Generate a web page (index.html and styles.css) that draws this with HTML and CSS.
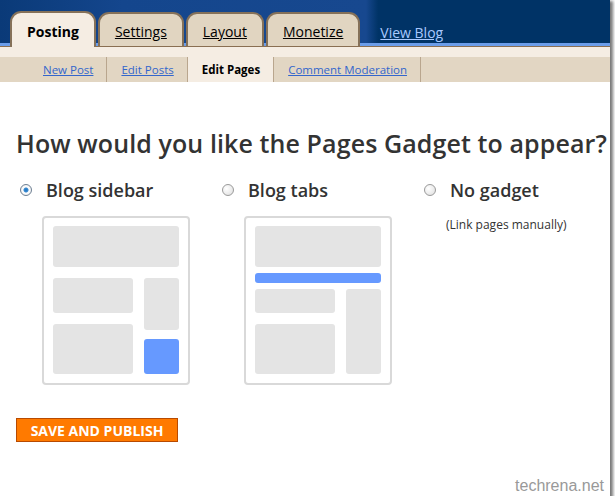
FILE: index.html
```html
<!DOCTYPE html>
<html>

<head>
    <meta charset="UTF-8">
    <title>Edit Pages</title>
    <link rel="stylesheet" href="styles.css">
</head>

<body>
    <div class="frame">
        <div class="header">
            <div class="tabs">
                <a class="tab active">Posting</a>
                <a class="tab" href="#">Settings</a>
                <a class="tab" href="#">Layout</a>
                <a class="tab" href="#">Monetize</a>
                <a class="view-blog" href="#">View Blog</a>
            </div>
        </div>
        <div class="strip"></div>
        <div class="subnav">
            <a class="sub" href="#">New Post</a>
            <a class="sub" href="#">Edit Posts</a>
            <span class="sub active">Edit Pages</span>
            <a class="sub" href="#">Comment Moderation</a>
        </div>

        <div class="content">
            <h1>How would you like the Pages Gadget to appear?</h1>

            <div class="options">
                <div class="option">
                    <div class="choice">
                        <span class="radio checked"></span>
                        <span class="label">Blog sidebar</span>
                    </div>
                    <div class="thumb">
                        <div class="blk top"></div>
                        <div class="cols">
                            <div class="col-main">
                                <div class="blk h35"></div>
                                <div class="blk h50"></div>
                            </div>
                            <div class="col-side">
                                <div class="blk h52"></div>
                                <div class="blk h35 blue"></div>
                            </div>
                        </div>
                    </div>
                </div>

                <div class="option">
                    <div class="choice">
                        <span class="radio"></span>
                        <span class="label">Blog tabs</span>
                    </div>
                    <div class="thumb tabs-thumb">
                        <div class="blk top"></div>
                        <div class="blk bar blue"></div>
                        <div class="cols">
                            <div class="col-main">
                                <div class="blk h24"></div>
                                <div class="blk h50"></div>
                            </div>
                            <div class="col-side">
                                <div class="blk full"></div>
                            </div>
                        </div>
                    </div>
                </div>

                <div class="option">
                    <div class="choice">
                        <span class="radio"></span>
                        <span class="label">No gadget</span>
                    </div>
                    <div class="note">(Link pages manually)</div>
                </div>
            </div>

            <button class="save">SAVE AND PUBLISH</button>
        </div>

        <div class="watermark">techrena.net</div>
    </div>
</body>

</html>
```

FILE: styles.css
```css
body {
    margin: 0;
    background: #fff;
    font-family: "Open Sans", "DejaVu Sans", sans-serif;
}

.frame {
    width: 610px;
    height: 496px;
    position: relative;
    overflow: hidden;
    background: #fff;
    box-shadow: 2px 2px 3px 1px #777;
}

/* top bar */
.header {
    height: 46px;
    background:
        linear-gradient(#6b9de9, #6b9de9) bottom / 100% 3px no-repeat,
        linear-gradient(90deg, #0a3a78 0, #14468d 20%, #17488f 60%, #003366 62%);
    border-bottom: 1px solid #8a6f52;
}

.tabs {
    display: flex;
    align-items: flex-end;
    height: 46px;
    padding-left: 10px;
    gap: 2px;
}

.tab {
    height: 32px;
    line-height: 36px;
    padding: 0 15px;
    background: #e1d5c1;
    border: 2px solid #857159;
    border-bottom: none;
    border-radius: 11px 11px 0 0;
    color: #000;
    font-size: 14px;
    text-decoration: underline;
}

.tab.active {
    background: #f5ede3;
    font-weight: bold;
    text-decoration: none;
    height: 34px;
    line-height: 38px;
    margin-bottom: -1px;
    position: relative;
}

.view-blog {
    margin-left: 18px;
    line-height: 26px;
    color: #a9c8ff;
    font-size: 14px;
}

.strip {
    height: 10px;
    background: #f5ede3;
}

.subnav {
    display: flex;
    height: 25px;
    padding-left: 29px;
    background: #e2d6c3;
}

.sub {
    padding: 0 13px 0 14px;
    line-height: 25px;
    font-size: 11.5px;
    color: #3366cc;
    border-right: 1px solid #b9a68e;
}

.sub.active {
    background: #f5ede3;
    color: #000;
    font-weight: bold;
}

/* main */
.content {
    padding: 0 16px;
}

h1 {
    margin: 44px 0 0;
    font-size: 25px;
    font-weight: 600;
    letter-spacing: 0.1px;
    color: #333;
    line-height: 34px;
    white-space: nowrap;
}

.options {
    display: flex;
    margin: 18px 0 0 4px;
}

.option {
    flex: none;
    width: 202px;
}

.choice {
    display: flex;
    align-items: center;
    gap: 14px;
    height: 24px;
}

.radio {
    width: 10px;
    height: 10px;
    border: 1px solid #9a9a9a;
    border-radius: 50%;
    background: radial-gradient(circle at 35% 35%, #fff, #ddd);
}

.radio.checked {
    background: radial-gradient(circle, #1a74c4 0, #3a8ad0 2px, #fff 3px, #e4e4e4 100%);
    border-color: #6d7f93;
}

.label {
    font-size: 18px;
    font-weight: 600;
    color: #333;
}

.note {
    margin: 14px 0 0 22px;
    font-size: 12px;
    color: #333;
}

.thumb {
    width: 126px;
    margin: 14px 0 0 22px;
    padding: 8px 9px 9px;
    border: 2px solid #d9d9d9;
    border-radius: 4px;
    display: flex;
    flex-direction: column;
    gap: 11px;
}

.tabs-thumb {
    gap: 6px;
}

.blk {
    background: #e4e4e4;
    border-radius: 3px;
}

.blk.blue {
    background: #6699ff;
}

.top { height: 41px; }
.bar { height: 10px; }
.h24 { height: 24px; }
.h35 { height: 35px; }
.h50 { height: 50px; }
.h52 { height: 52px; }

.cols {
    display: flex;
    gap: 11px;
}

.col-main {
    width: 80px;
    display: flex;
    flex-direction: column;
    gap: 11px;
}

.col-side {
    width: 35px;
    display: flex;
    flex-direction: column;
    gap: 9px;
}

.full {
    flex: 1;
}

.save {
    margin-top: 33px;
    width: 162px;
    height: 24px;
    padding: 0;
    background: #ff7a00;
    border: 1px solid #b84a00;
    color: #fff;
    font-family: "Open Sans", "DejaVu Sans", sans-serif;
    font-size: 14px;
    font-weight: bold;
}

.watermark {
    position: absolute;
    right: 6px;
    bottom: 1px;
    font-family: "Liberation Sans", Arial, sans-serif;
    font-size: 16px;
    color: #999;
}
```
